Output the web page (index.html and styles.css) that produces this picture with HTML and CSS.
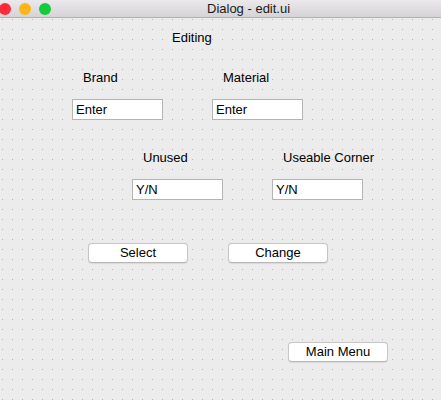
FILE: index.html
```html
<!DOCTYPE html>
<html>
<head>
<meta charset="utf-8">
<title>Dialog - edit.ui</title>
<link rel="stylesheet" href="styles.css">
</head>
<body>
<div class="window">
  <div class="titlebar">
    <div class="lights">
      <span class="light red"></span>
      <span class="light yellow"></span>
      <span class="light green"></span>
    </div>
    <div class="title">Dialog - edit.ui</div>
  </div>
  <div class="canvas">
    <div class="heading">Editing</div>
    <div class="fields fields-top">
      <div class="field">
        <div class="label">Brand</div>
        <div class="input">Enter</div>
      </div>
      <div class="field">
        <div class="label">Material</div>
        <div class="input">Enter</div>
      </div>
    </div>
    <div class="fields fields-bottom">
      <div class="field">
        <div class="label">Unused</div>
        <div class="input">Y/N</div>
      </div>
      <div class="field">
        <div class="label">Useable Corner</div>
        <div class="input">Y/N</div>
      </div>
    </div>
    <div class="buttons">
      <div class="btn">Select</div>
      <div class="btn">Change</div>
    </div>
    <div class="footer">
      <div class="btn">Main Menu</div>
    </div>
  </div>
</div>
</body>
</html>
```

FILE: styles.css
```css
html, body {
  margin: 0;
  padding: 0;
}
body {
  width: 441px;
  height: 400px;
  overflow: hidden;
  font-family: "Liberation Sans", Arial, sans-serif;
  font-size: 13px;
  color: #000;
  background: #ececec;
}
.window {
  width: 441px;
  height: 400px;
  display: flex;
  flex-direction: column;
}
.titlebar {
  height: 17px;
  border-bottom: 1px solid #b3b1b3;
  background: linear-gradient(#ebe9eb, #d5d3d5);
  display: flex;
  align-items: center;
}
.lights {
  display: flex;
  gap: 8px;
  margin-left: -1px;
}
.light {
  width: 12px;
  height: 12px;
  border-radius: 50%;
}
.red { background: #fd2a3c; }
.yellow { background: #fdb519; }
.green { background: #13cc3d; }
.title {
  margin-left: 156px;
  line-height: 17px;
  color: #1a1a1a;
}
.canvas {
  flex: 1;
  background-color: #ececec;
  background-image:
    linear-gradient(90deg, #ececec 9px, transparent 9px),
    linear-gradient(180deg, #ececec 9px, #b6b6b6 9px);
  background-size: 10px 10px;
  background-position: 3px 2px;
  display: flex;
  flex-direction: column;
  align-items: flex-start;
}
.heading {
  margin-top: 12px;
  margin-left: 172px;
  line-height: 16px;
}
.fields {
  display: flex;
  gap: 49px;
}
.fields-top {
  margin-top: 24px;
  margin-left: 72px;
}
.fields-bottom {
  margin-top: 30px;
  margin-left: 132px;
}
.field {
  display: flex;
  flex-direction: column;
  gap: 13px;
}
.label {
  margin-left: 11px;
  line-height: 16px;
}
.input {
  width: 86px;
  height: 19px;
  border: 1px solid #b4b4b4;
  background: #fff;
  padding-left: 3px;
  line-height: 19px;
  box-sizing: content-box;
}
.buttons {
  display: flex;
  gap: 40px;
  margin-top: 43px;
  margin-left: 88px;
}
.btn {
  width: 98px;
  height: 18px;
  border: 1px solid #c6c6c6;
  border-bottom-color: #b8b8b8;
  border-radius: 4px;
  background: #fff;
  text-align: center;
  line-height: 18px;
  box-shadow: 0 0.5px 1px rgba(0,0,0,0.08);
}
.footer {
  margin-top: 79px;
  margin-left: 288px;
}
```
